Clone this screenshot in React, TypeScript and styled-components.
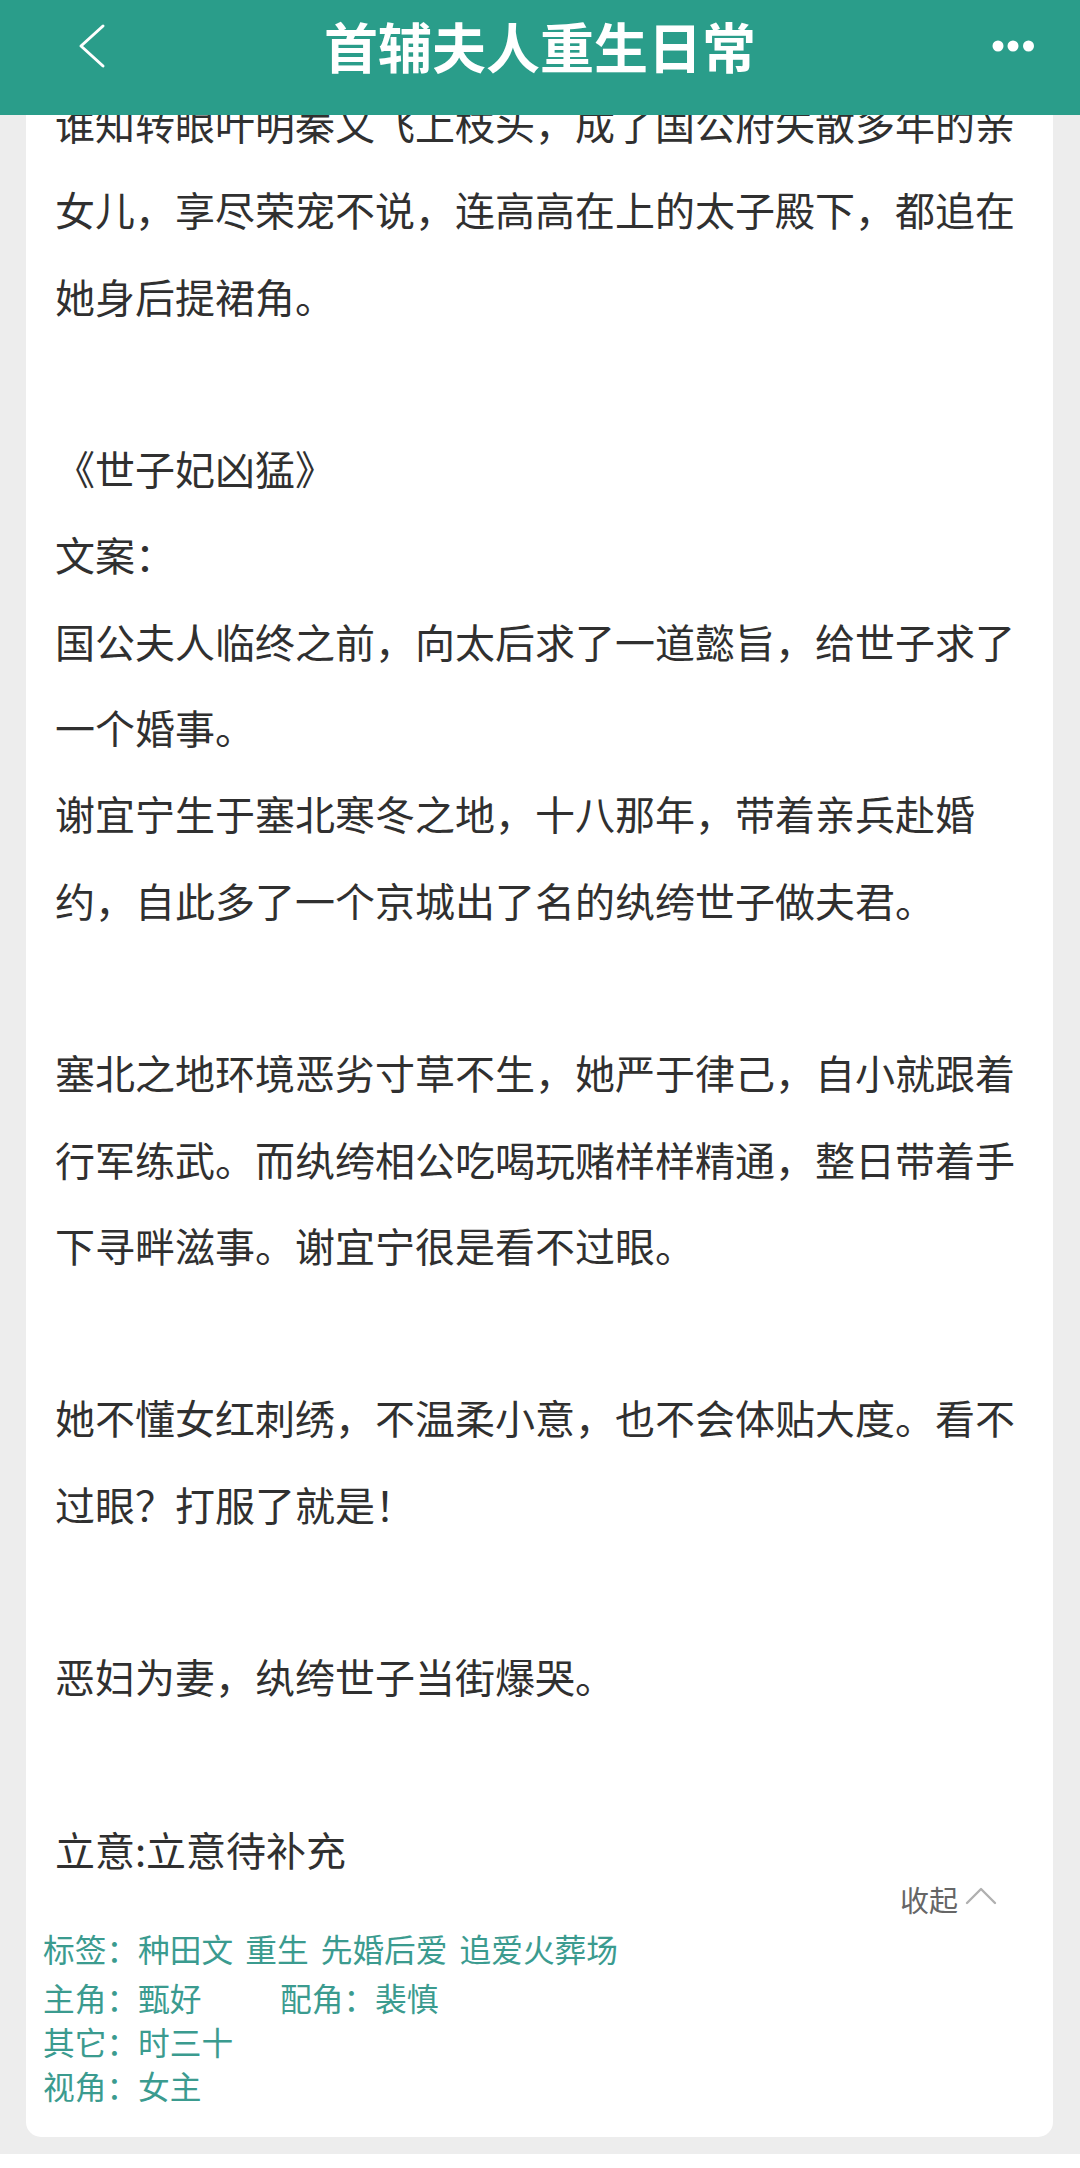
import React from "react";
import styled, { createGlobalStyle } from "styled-components";

const GlobalStyle = createGlobalStyle`
  html, body {
    margin: 0;
    padding: 0;
    background: #ededed;
  }

  body {
    font-family: "Noto Sans CJK SC", "Noto Sans", sans-serif;
  }
`;

const paragraphs = [
  "谁知转眼叶明秦又飞上枝头，成了国公府失散多年的亲女儿，享尽荣宠不说，连高高在上的太子殿下，都追在她身后提裙角。",
  "",
  "《世子妃凶猛》",
  "文案：",
  "国公夫人临终之前，向太后求了一道懿旨，给世子求了一个婚事。",
  "谢宜宁生于塞北寒冬之地，十八那年，带着亲兵赴婚约，自此多了一个京城出了名的纨绔世子做夫君。",
  "",
  "塞北之地环境恶劣寸草不生，她严于律己，自小就跟着行军练武。而纨绔相公吃喝玩赌样样精通，整日带着手下寻畔滋事。谢宜宁很是看不过眼。",
  "",
  "她不懂女红刺绣，不温柔小意，也不会体贴大度。看不过眼？打服了就是！",
  "",
  "恶妇为妻，纨绔世子当街爆哭。",
  "",
  "立意:立意待补充",
];

const App = () => {
  return (
    <>
      <GlobalStyle />
      <Header>
        <Bar>
          <IconButton aria-label="返回">
            <svg width="30" height="46" viewBox="0 0 30 46" fill="none">
              <polyline
                points="26,3 4,23 26,43"
                stroke="#fff"
                strokeWidth="3"
                strokeLinecap="round"
                strokeLinejoin="round"
              />
            </svg>
          </IconButton>
          <Title>首辅夫人重生日常</Title>
          <IconButton aria-label="更多">
            <svg width="44" height="12" viewBox="0 0 44 12">
              <circle cx="6" cy="6" r="5.5" fill="#fff" />
              <circle cx="21" cy="6" r="5.5" fill="#fff" />
              <circle cx="36.5" cy="6" r="5.5" fill="#fff" />
            </svg>
          </IconButton>
        </Bar>
      </Header>

      <Card>
        <Body>
          {paragraphs.map((text, i) =>
            text ? <Para key={i}>{text}</Para> : <Blank key={i} />
          )}
        </Body>

        <CollapseRow>
          <span>收起</span>
          <svg width="32" height="18" viewBox="0 0 32 18" fill="none">
            <polyline
              points="2,16 16,2 30,16"
              stroke="#b0b0b0"
              strokeWidth="2.4"
              strokeLinecap="round"
              strokeLinejoin="round"
            />
          </svg>
        </CollapseRow>

        <Tags>
          <TagRow $first>标签：种田文 重生 先婚后爱 追爱火葬场</TagRow>
          <TagRow>
            <TagItem $wide>主角：甄好</TagItem>
            <TagItem>配角：裴慎</TagItem>
          </TagRow>
          <TagRow>其它：时三十</TagRow>
          <TagRow>视角：女主</TagRow>
        </Tags>
      </Card>

      <BottomStrip />
    </>
  );
};

export default App;

const Header = styled.header`
  position: fixed;
  top: 0;
  left: 0;
  right: 0;
  z-index: 10;
  height: 115px;
  background: #2a9d8a;
`;

const Bar = styled.div`
  display: flex;
  align-items: center;
  justify-content: space-between;
  height: 91px;
  padding: 0 44px 0 77px;
`;

const IconButton = styled.div`
  display: flex;
  align-items: center;
  justify-content: center;
`;

const Title = styled.h1`
  position: absolute;
  top: 0;
  left: 0;
  right: 0;
  margin: 0;
  text-align: center;
  font-size: 54px;
  font-weight: 700;
  color: #fff;
  line-height: 91px;
  pointer-events: none;
`;

const Card = styled.main`
  margin: 0 27px 17px 26px;
  padding: 80px 0 30px;
  background: #fff;
  border-radius: 0 0 15px 15px;
`;

const Body = styled.div`
  padding: 0 26px 0 29px;
  color: #303030;
  font-size: 40px;
  line-height: 86.3px;
`;

const Para = styled.p`
  margin: 0;
`;

const Blank = styled.div`
  height: 86.3px;
`;

const CollapseRow = styled.div`
  display: flex;
  align-items: center;
  justify-content: flex-end;
  gap: 7px;
  height: 36px;
  margin-top: -11px;
  padding-right: 56px;
  font-size: 29px;
  line-height: 36px;
  color: #666;

  svg {
    margin-top: -6px;
  }
`;

const Tags = styled.section`
  margin-top: 9px;
  padding-left: 17px;
  color: #3b9b8f;
  font-size: 31.7px;
`;

const TagRow = styled.div<{ $first?: boolean }>`
  display: flex;
  height: 44px;
  line-height: 44px;
  white-space: pre;
  word-spacing: 5px;
  margin-bottom: ${({ $first }) => ($first ? "5px" : "0")};
`;

const TagItem = styled.span<{ $wide?: boolean }>`
  min-width: ${({ $wide }) => ($wide ? "237px" : "0")};
`;

const BottomStrip = styled.div`
  height: 60px;
  background: #fff;
`;
